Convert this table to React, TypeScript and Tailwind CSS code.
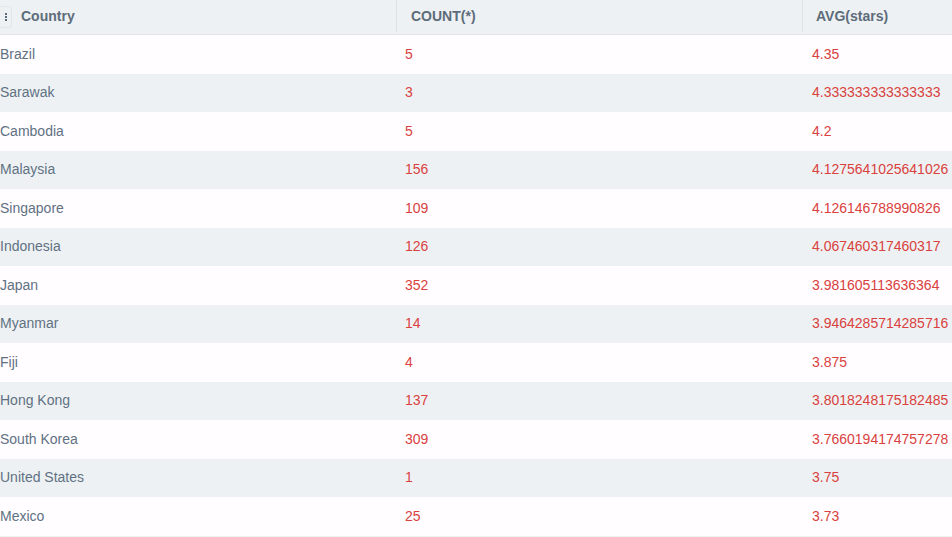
const ROWS = [
  ["Brazil", "5", "4.35"],
  ["Sarawak", "3", "4.333333333333333"],
  ["Cambodia", "5", "4.2"],
  ["Malaysia", "156", "4.1275641025641026"],
  ["Singapore", "109", "4.126146788990826"],
  ["Indonesia", "126", "4.067460317460317"],
  ["Japan", "352", "3.981605113636364"],
  ["Myanmar", "14", "3.9464285714285716"],
  ["Fiji", "4", "3.875"],
  ["Hong Kong", "137", "3.8018248175182485"],
  ["South Korea", "309", "3.7660194174757278"],
  ["United States", "1", "3.75"],
  ["Mexico", "25", "3.73"],
];

export default function App() {
  return (
    <div
      className="w-[952px] h-[537px] overflow-hidden bg-[#eef1f3] text-[14px]"
      style={{ fontFamily: "'Liberation Sans', Arial, sans-serif" }}
    >
      <div className="flex h-[35px] pb-[2px] border-b border-[#e1e5e8] bg-[#eef1f3] font-bold text-[#5d6c7a]">
        <div className="w-[396px] flex items-center shrink-0">
          <div className="w-[13px] h-[22px] ml-[-1px] mr-[9px] mt-[2px] rounded-[3px] border border-[#e3e6e9] flex flex-col items-center justify-center gap-[1px]">
            <span className="w-[2px] h-[2px] bg-[#5d6c7a]" />
            <span className="w-[2px] h-[2px] bg-[#5d6c7a]" />
            <span className="w-[2px] h-[2px] bg-[#5d6c7a]" />
          </div>
          Country
        </div>
        <div className="w-[406px] shrink-0 flex items-center pl-[14px] border-l border-[#dfe3e6]">COUNT(*)</div>
        <div className="flex-1 flex items-center pl-[13px] border-l border-[#dfe3e6]">AVG(stars)</div>
      </div>
      {ROWS.map(([country, count, avg], i) => (
        <div
          key={country}
          className={`flex h-[38.5px] items-center ${i % 2 === 0 ? "bg-[#fffdff]" : "bg-[#eef1f3]"}`}
        >
          <div className="w-[396px] shrink-0 text-[#5f7183]">{country}</div>
          <div className="w-[406px] shrink-0 pl-[9px] text-[#d9413e]">{count}</div>
          <div className="flex-1 pl-[10px] text-[#d9413e] whitespace-nowrap">{avg}</div>
        </div>
      ))}
    </div>
  );
}
